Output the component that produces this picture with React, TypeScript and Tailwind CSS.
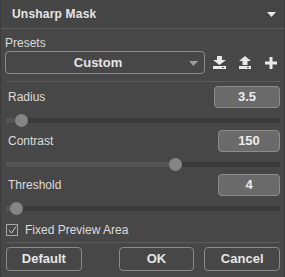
import React from "react";

const FONT = "font-['Tahoma','DejaVu_Sans','Liberation_Sans',sans-serif]";

function Slider({ pos }: { pos: number }) {
  // pos = thumb centre in px from track start
  return (
    <div className="relative h-[22px]">
      <div className="absolute left-0 right-0 top-[10px] h-[5px] bg-[#3a3a3a]" />
      <div className="absolute left-0 top-[10px] h-[5px] bg-[#545454]" style={{ width: pos }} />
      <div
        className="absolute top-[6px] w-[13px] h-[13px] rounded-full bg-[#858585]"
        style={{ left: pos - 6 }}
      />
    </div>
  );
}

function ParamRow({ label, value, boxW }: { label: string; value: string; boxW: string }) {
  return (
    <div className="flex items-center justify-between h-[22px]">
      <span className="pl-[2px] text-[12px] text-[#dcdcdc] font-['Liberation_Sans',sans-serif]">{label}</span>
      <div
        className={`${boxW} h-[22px] rounded-[4px] border border-[#8c8c8c] bg-[#6a6a6a] flex items-center justify-center text-[13px] font-bold text-[#ececec] font-['Liberation_Sans',sans-serif]`}
      >
        {value}
      </div>
    </div>
  );
}

export default function App() {
  return (
    <div className={`w-[285px] h-[277px] bg-[#474747] border-x border-[#3c3c3c] ${FONT} select-none`}>
      {/* header */}
      <div className="h-[29px] flex items-center justify-between pl-[11px] pr-[8px] bg-[#454545] border-b border-[#5c5c5c]">
        <span className="text-[12px] font-bold text-[#e4e4e4] font-['Liberation_Sans',sans-serif] tracking-[0.2px]">
          Unsharp Mask
        </span>
        <svg width="9" height="5" viewBox="0 0 9 5">
          <polygon points="0,0 9,0 4.5,5" fill="#e8e8e8" />
        </svg>
      </div>

      <div className="px-[4px]">
        {/* presets */}
        <div className="pt-[6px] h-[22px] leading-[16px] text-[12px] text-[#dcdcdc] font-['Liberation_Sans',sans-serif]">
          Presets
        </div>
        <div className="flex items-center h-[23px]">
          <div className="w-[200px] h-[23px] rounded-[4px] border border-[#8a8a8a] relative flex items-center justify-center">
            <span className="text-[13px] font-bold text-[#e6e6e6] font-['Liberation_Sans',sans-serif] -ml-[14px]">
              Custom
            </span>
            <svg className="absolute right-[6px] top-[9px]" width="9" height="5" viewBox="0 0 9 5">
              <polygon points="0,0 9,0 4.5,5" fill="#9c9c9c" />
            </svg>
          </div>
          <div className="flex items-center ml-[8px] gap-[13px]">
            <svg width="13" height="14" viewBox="0 0 13 14">
              <rect x="4" y="0" width="5" height="4" fill="#e8e8e8" />
              <polygon points="0,4 13,4 6.5,9" fill="#e8e8e8" />
              <rect x="0" y="10" width="13" height="3" fill="#e8e8e8" />
              <rect x="9" y="11" width="2" height="1" fill="#555" />
            </svg>
            <svg width="12" height="14" viewBox="0 0 12 14">
              <polygon points="6,0 12,5 0,5" fill="#e8e8e8" />
              <rect x="3.5" y="5" width="5" height="4" fill="#e8e8e8" />
              <rect x="0" y="10" width="12" height="3" fill="#e8e8e8" />
              <rect x="8" y="11" width="2" height="1" fill="#555" />
            </svg>
            <svg width="12" height="12" viewBox="0 0 12 12" className="ml-[1px]">
              <rect x="4.5" y="0" width="3" height="12" fill="#ececec" />
              <rect x="0" y="4.5" width="12" height="3" fill="#ececec" />
            </svg>
          </div>
        </div>

        <div className="mt-[7px] h-px bg-[#5c5c5c] ml-[1px]" />

        {/* params */}
        <div className="mt-[4px] pl-[1px]">
          <ParamRow label="Radius" value="3.5" boxW="w-[66px]" />
          <Slider pos={15} />
          <ParamRow label="Contrast" value="150" boxW="w-[62px]" />
          <Slider pos={169} />
          <ParamRow label="Threshold" value="4" boxW="w-[62px]" />
          <Slider pos={10} />
        </div>

        {/* checkbox */}
        <div className="flex items-center h-[14px] mt-[5px] pl-[1px]">
          <div className="w-[12px] h-[12px] border border-[#a8a8a8] flex items-center justify-center">
            <svg width="9" height="8" viewBox="0 0 9 8">
              <polyline points="1,4 3.5,7 8,0.5" fill="none" stroke="#cfcfcf" strokeWidth="1" />
            </svg>
          </div>
          <span className="ml-[7px] text-[12px] text-[#dcdcdc] font-['Liberation_Sans',sans-serif]">
            Fixed Preview Area
          </span>
        </div>

        <div className="mt-[5px] h-px bg-[#5c5c5c] ml-[1px]" />

        {/* buttons */}
        <div className="mt-[4px] flex items-center pl-[1px]">
          <button className="w-[76px] h-[24px] rounded-[4px] border border-[#8a8a8a] text-[13px] font-bold text-[#e6e6e6] font-['Liberation_Sans',sans-serif]">
            Default
          </button>
          <button className="ml-[37px] w-[76px] h-[24px] rounded-[4px] border border-[#8a8a8a] text-[13px] font-bold text-[#e6e6e6] font-['Liberation_Sans',sans-serif]">
            OK
          </button>
          <button className="ml-[10px] w-[76px] h-[24px] rounded-[4px] border border-[#8a8a8a] text-[13px] font-bold text-[#e6e6e6] font-['Liberation_Sans',sans-serif]">
            Cancel
          </button>
        </div>
      </div>
    </div>
  );
}
